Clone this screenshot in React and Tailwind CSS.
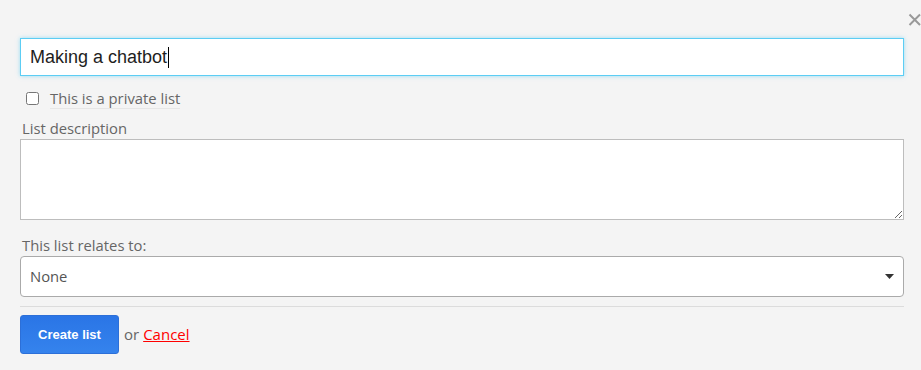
import React from 'react';

const App = () => {
  return (
    <div className="relative h-[370px] w-[921px] overflow-hidden bg-[#f4f4f4] font-['Open_Sans',sans-serif]">
      {/* close */}
      <button className="absolute left-[908px] top-[13px] h-[13px] w-[13px]" aria-label="Close">
        <svg viewBox="0 0 13 13" width="13" height="13">
          <path d="M1.5 1.5 L12 12 M12 1.5 L1.5 12" stroke="#999" strokeWidth="2" />
        </svg>
      </button>

      <div className="flex w-[904px] flex-col pl-[20px] pt-[38px]">
        {/* list name */}
        <div className="flex h-[38px] items-center border border-[#5ccdf4] bg-white pl-[9px] shadow-[0_0_4px_rgba(92,205,244,0.6)]">
          <span className="font-['Liberation_Sans',Arial,sans-serif] text-[18px] text-[#1e1e1e]">
            Making a chatbot
          </span>
          <span className="ml-[1px] h-[21px] w-px bg-black" />
        </div>

        {/* private */}
        <label className="mt-[12px] flex h-[20px] items-center">
          <input type="checkbox" className="ml-[6px] h-[13px] w-[13px]" />
          <span className="ml-[11px] border-b border-[#e6e6e6] text-[14.8px] leading-[20px] text-[#666]">
            This is a private list
          </span>
        </label>

        {/* description */}
        <div className="mt-[10px] pl-[2px] text-[14.8px] leading-[20px] text-[#666]">List description</div>
        <textarea className="mt-[1px] block h-[81px] w-full resize-y border border-[#bdbdbd] bg-white outline-none" />

        {/* relates to */}
        <div className="mt-[15px] pl-[2px] text-[14.8px] leading-[20px] text-[#666]">This list relates to:</div>
        <div className="mt-[1px] flex h-[41px] items-center justify-between rounded-[4px] border border-[#aaa] bg-white pl-[9px] pr-[9px]">
          <span className="text-[14.8px] text-[#555]">None</span>
          <svg width="9" height="5" viewBox="0 0 9 5">
            <path d="M0 0 H9 L4.5 5 Z" fill="#333" />
          </svg>
        </div>

        <div className="mt-[9px] h-px w-full bg-[#dcdcdc]" />

        {/* actions */}
        <div className="mt-[8px] flex items-center">
          <button className="h-[39px] w-[99px] rounded-[3px] border border-[#2c6fd8] bg-gradient-to-b from-[#2a75e6] to-[#3583ed] font-['Liberation_Sans',Arial,sans-serif] text-[13px] font-bold text-white">
            Create list
          </button>
          <span className="ml-[5px] text-[15px] text-[#666]">or</span>
          <a href="#" className="ml-[4px] text-[15px] text-[#ff0000] underline">Cancel</a>
        </div>
      </div>
    </div>
  );
};

export default App;
